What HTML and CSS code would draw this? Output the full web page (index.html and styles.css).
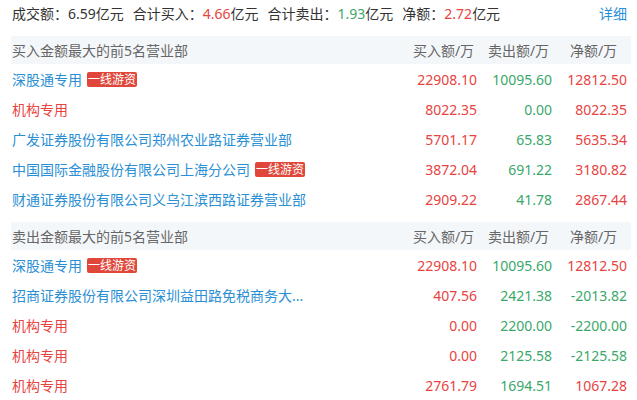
FILE: index.html
```html
<!DOCTYPE html>
<html lang="zh-CN">
<head>
    <meta charset="UTF-8">
    <title>龙虎榜营业部</title>
    <link rel="stylesheet" href="styles.css">
</head>
<body>
    <div class="panel">
        <!-- 汇总 -->
        <div class="summary">
            <span class="item">成交额：<span class="num">6.59</span>亿元</span>
            <span class="item">合计买入：<span class="num up">4.66</span>亿元</span>
            <span class="item">合计卖出：<span class="num down">1.93</span>亿元</span>
            <span class="item">净额：<span class="num up">2.72</span>亿元</span>
            <a class="more" href="#">详细</a>
        </div>

        <!-- 买入前5 -->
        <div class="table">
            <div class="row head">
                <div class="name">买入金额最大的前5名营业部</div>
                <div class="col">买入额/万</div>
                <div class="col">卖出额/万</div>
                <div class="col">净额/万</div>
            </div>
            <div class="row">
                <div class="name"><span class="dept">深股通专用</span><span class="tag">一线游资</span></div>
                <div class="col up">22908.10</div>
                <div class="col down">10095.60</div>
                <div class="col up">12812.50</div>
            </div>
            <div class="row">
                <div class="name"><span class="dept org">机构专用</span></div>
                <div class="col up">8022.35</div>
                <div class="col down">0.00</div>
                <div class="col up">8022.35</div>
            </div>
            <div class="row">
                <div class="name"><span class="dept">广发证券股份有限公司郑州农业路证券营业部</span></div>
                <div class="col up">5701.17</div>
                <div class="col down">65.83</div>
                <div class="col up">5635.34</div>
            </div>
            <div class="row">
                <div class="name"><span class="dept">中国国际金融股份有限公司上海分公司</span><span class="tag">一线游资</span></div>
                <div class="col up">3872.04</div>
                <div class="col down">691.22</div>
                <div class="col up">3180.82</div>
            </div>
            <div class="row">
                <div class="name"><span class="dept">财通证券股份有限公司义乌江滨西路证券营业部</span></div>
                <div class="col up">2909.22</div>
                <div class="col down">41.78</div>
                <div class="col up">2867.44</div>
            </div>
        </div>

        <!-- 卖出前5 -->
        <div class="table">
            <div class="row head">
                <div class="name">卖出金额最大的前5名营业部</div>
                <div class="col">买入额/万</div>
                <div class="col">卖出额/万</div>
                <div class="col">净额/万</div>
            </div>
            <div class="row">
                <div class="name"><span class="dept">深股通专用</span><span class="tag">一线游资</span></div>
                <div class="col up">22908.10</div>
                <div class="col down">10095.60</div>
                <div class="col up">12812.50</div>
            </div>
            <div class="row">
                <div class="name"><span class="dept">招商证券股份有限公司深圳益田路免税商务大...</span></div>
                <div class="col up">407.56</div>
                <div class="col down">2421.38</div>
                <div class="col down">-2013.82</div>
            </div>
            <div class="row">
                <div class="name"><span class="dept org">机构专用</span></div>
                <div class="col up">0.00</div>
                <div class="col down">2200.00</div>
                <div class="col down">-2200.00</div>
            </div>
            <div class="row">
                <div class="name"><span class="dept org">机构专用</span></div>
                <div class="col up">0.00</div>
                <div class="col down">2125.58</div>
                <div class="col down">-2125.58</div>
            </div>
            <div class="row">
                <div class="name"><span class="dept org">机构专用</span></div>
                <div class="col up">2761.79</div>
                <div class="col down">1694.51</div>
                <div class="col up">1067.28</div>
            </div>
        </div>
    </div>
</body>
</html>
```

FILE: styles.css
```css
body {
    margin: 0;
    padding: 0 6px 0 11px;
    background-color: #fff;
    font-family: "Noto Sans", "Noto Sans CJK SC", sans-serif;
    font-size: 14px;
    color: #333;
    overflow: hidden;
}

.panel {
    width: 620px;
}

.summary {
    display: flex;
    align-items: center;
    height: 26px;
    padding-left: 1px;
    margin-bottom: 10px;
}

.summary .item {
    margin-right: 9px;
}

.more {
    margin-left: auto;
    margin-right: 4px;
    color: #2a8fd4;
    text-decoration: none;
}

.up {
    color: #e8433f;
}

.down {
    color: #3aa86a;
}

.table {
    margin-bottom: 8px;
}

.row {
    display: flex;
    align-items: center;
    height: 30px;
}

.row.head {
    height: 28px;
    background-color: #f4f7fa;
    color: #666;
}

.name {
    flex: 1;
    display: flex;
    align-items: center;
    min-width: 0;
    padding-left: 1px;
}

.dept {
    color: #2a8fd4;
    white-space: nowrap;
}

.dept.org {
    color: #e8433f;
}

.tag {
    margin-left: 5px;
    padding: 0 1px;
    height: 15px;
    line-height: 15px;
    font-size: 12px;
    color: #fff;
    background-color: #e0473a;
    border-radius: 2px;
}

.col {
    width: 75px;
    padding-right: 4px;
    box-sizing: border-box;
    text-align: right;
}

.head .col {
    padding-right: 0;
    text-align: center;
}
```
